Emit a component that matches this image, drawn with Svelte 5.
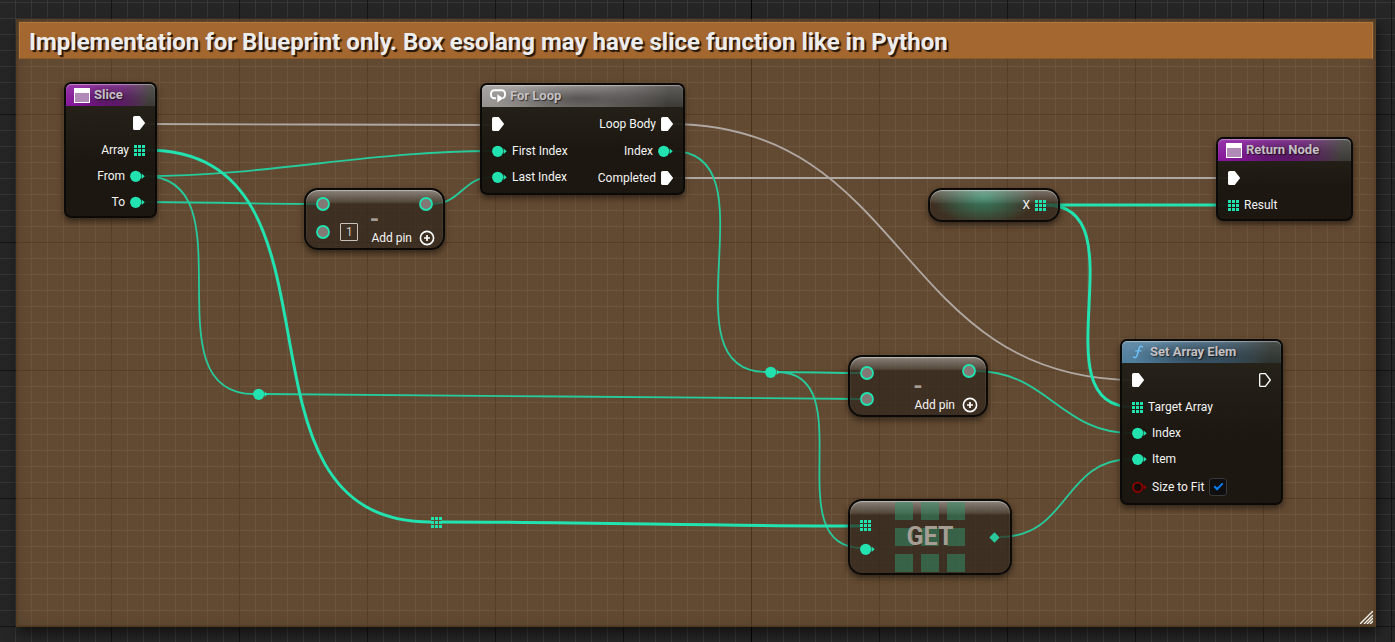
<script>
  // Output tangents grow with the total distance between both pins.
  function spline([x1, y1, x2, y2]) {
    const t = Math.round((Math.abs(x2 - x1) + Math.abs(y2 - y1)) / 3);
    return `M${x1} ${y1}C${x1 + t} ${y1} ${x2 - t} ${y2} ${x2} ${y2}`;
  }

  const wires = [
    { kind: 'exec', at: [142, 124, 495, 125] },
    { kind: 'exec', at: [670, 124, 1135, 380] },
    { kind: 'exec', at: [670, 178, 1231, 178] },
    { kind: 'int', at: [144, 176, 492, 151] },
    { kind: 'int', at: [144, 176, 254, 394] },
    { kind: 'int', at: [144, 202, 317, 204] },
    { kind: 'int', at: [432, 204, 492, 177] },
    { kind: 'int', at: [672, 151, 766, 372] },
    { kind: 'int', at: [264, 394, 861, 399] },
    { kind: 'int', at: [777, 372, 861, 373] },
    { kind: 'int', at: [777, 372, 862, 548] },
    { kind: 'int', at: [975, 371, 1132, 433] },
    { kind: 'int', at: [1000, 537, 1132, 459] },
    { kind: 'array', at: [146, 150, 431, 522] },
    { kind: 'array', at: [441, 522, 861, 526] },
    { kind: 'array', at: [1046, 205, 1228, 205] },
    { kind: 'array', at: [1046, 205, 1132, 407] }
  ];

  const nodes = [
    {
      title: 'Slice', icon: 'window', tone: 'purple', x: 64, y: 82, w: 93,
      ins: [],
      outs: [['exec', ''], ['array', 'Array'], ['int', 'From'], ['int', 'To']]
    },
    {
      title: 'For Loop', icon: 'loop', tone: 'grey', x: 480, y: 83, w: 205,
      ins: [['exec', ''], ['int', 'First Index'], ['int', 'Last Index']],
      outs: [['exec', 'Loop Body'], ['int', 'Index'], ['exec', 'Completed']]
    },
    {
      title: 'Return Node', icon: 'window', tone: 'purple', x: 1216, y: 137, w: 137,
      ins: [['exec', ''], ['array', 'Result']],
      outs: []
    },
    {
      title: 'Set Array Elem', icon: 'fn', tone: 'blue', x: 1120, y: 339, w: 163,
      ins: [['exec', ''], ['array', 'Target Array'], ['int', 'Index'], ['int', 'Item'], ['bool', 'Size to Fit']],
      outs: [['execOpen', '']]
    }
  ];

  let first = $state('1');
  let sizeToFit = $state(true);
</script>

{#snippet pin(kind)}
  {#if kind === 'exec' || kind === 'execOpen'}
    <svg class="pin" width="12" height="14" viewBox="0 0 12 14">
      <path d="M1.6.7H6.4L11.3 7 6.4 13.3H1.6Q.7 13.3.7 12.4V1.6Q.7.7 1.6.7Z"
        fill={kind === 'exec' ? '#fff' : 'none'} stroke="#fff" stroke-width="1.3" stroke-linejoin="round" />
    </svg>
  {:else if kind === 'array'}
    <svg class="pin" width="11" height="12" viewBox="0 0 11 12" shape-rendering="crispEdges">
      <path d="M0 1h3v3H0zM4 1h3v3H4zM8 1h3v3H8zM0 5h3v3H0zM4 5h3v3H4zM8 5h3v3H8zM0 9h3v3H0zM4 9h3v3H4zM8 9h3v3H8z" fill="#22e2b0" />
    </svg>
  {:else if kind === 'int'}
    <svg class="pin" width="15" height="12" viewBox="0 0 15 12">
      <circle cx="5.7" cy="6.3" r="5.6" fill="#22e2b0" />
      <path d="M11.6 3.5 14.7 6.3 11.6 9.1Z" fill="#22e2b0" />
    </svg>
  {:else if kind === 'bool'}
    <svg class="pin" width="15" height="12" viewBox="0 0 15 12">
      <circle cx="5.7" cy="6.3" r="4.7" fill="#150b08" stroke="#8b0000" stroke-width="1.8" />
      <path d="M11.6 3.5 14.7 6.3 11.6 9.1Z" fill="#8b0000" />
    </svg>
  {:else if kind === 'wild'}
    <svg class="pin" width="14" height="14" viewBox="0 0 14 14">
      <circle cx="7" cy="7" r="6" fill="#827875" stroke="#22e2b0" stroke-width="1.8" />
    </svg>
  {:else if kind === 'diamond'}
    <svg class="pin" width="11" height="11" viewBox="0 0 11 11">
      <path d="M5.5.3 10.7 5.5 5.5 10.7.3 5.5Z" fill="#29c99c" />
    </svg>
  {/if}
{/snippet}

{#snippet icon(name)}
  {#if name === 'window'}
    <svg width="16" height="15" viewBox="0 0 16 15">
      <rect x=".5" y=".5" width="15" height="14" fill="#b089b6" stroke="#fff" />
      <rect width="16" height="5" fill="#fff" />
    </svg>
  {:else if name === 'loop'}
    <svg width="16" height="14" viewBox="0 0 16 14" fill="none" stroke="#fff" stroke-width="1.9">
      <path d="M6 9.3H4.3A3.3 3.3 0 0 1 1 6V4.5A3.3 3.3 0 0 1 4.3 1.2H11.7A3.3 3.3 0 0 1 15 4.5V6A3.3 3.3 0 0 1 12.6 9.1" />
      <path d="M7.3 5.2V13.4L13.2 9.3Z" fill="#fff" stroke="none" />
    </svg>
  {:else}
    <svg width="16" height="14" viewBox="0 0 16 14" fill="none" stroke="#6fc0f5" stroke-linecap="round">
      <path d="M12.3 2C11.8.8 9.8.8 9.1 3L7.1 10.4C6.5 12.9 4.3 13.1 3.6 11.9" stroke-width="1.5" />
      <path d="M5.5 5.8H11" stroke-width="1.2" />
    </svg>
  {/if}
{/snippet}

{#snippet addPin()}
  <button class="add" type="button">
    Add pin
    <svg width="16" height="16" viewBox="0 0 16 16" fill="none" stroke="#fff">
      <circle cx="8" cy="8" r="6.6" stroke-width="1.6" />
      <path d="M8 5V11M5 8H11" stroke-width="1.7" />
    </svg>
  </button>
{/snippet}

<main class="graph">
  <section class="comment">
    <h1>Implementation for Blueprint only. Box esolang may have slice function like in Python</h1>
    <svg class="grip" width="13" height="13" viewBox="0 0 13 13" stroke="#f4f0ea" stroke-width="1.4">
      <path d="M0 13 13 0M4 13 13 4M7 13 13 7M10 13 13 10" />
    </svg>
  </section>

  <svg class="wires" width="1" height="1" fill="none">
    {#each wires as wire}
      <path class={wire.kind} d={spline(wire.at)} />
    {/each}
  </svg>

  {#each nodes as node}
    <article class="node" style="left:{node.x}px;top:{node.y}px;width:{node.w}px">
      <header class={node.tone}>
        {@render icon(node.icon)}
        <h2>{node.title}</h2>
      </header>
      <div class="pins">
        <ul>
          {#each node.ins as [kind, label]}
            <li class={kind}>
              {@render pin(kind)}
              {#if kind === 'bool'}
                <label for="fit">{label}</label>
                <input id="fit" type="checkbox" bind:checked={sizeToFit} />
              {:else}
                <span>{label}</span>
              {/if}
            </li>
          {/each}
        </ul>
        <ul class="out">
          {#each node.outs as [kind, label]}
            <li class={kind}><span>{label}</span>{@render pin(kind)}</li>
          {/each}
        </ul>
      </div>
    </article>
  {/each}

  <article class="compact minus" style="left:304px;top:188px;width:141px">
    <h2>-</h2>
    <ul>
      <li>{@render pin('wild')}</li>
      <li>{@render pin('wild')}<input class="value" type="text" aria-label="Subtracted value" bind:value={first} /></li>
    </ul>
    <ul class="out"><li>{@render pin('wild')}</li></ul>
    {@render addPin()}
  </article>

  <article class="compact minus" style="left:848px;top:355px;width:140px">
    <h2>-</h2>
    <ul class="low">
      <li>{@render pin('wild')}</li>
      <li>{@render pin('wild')}</li>
    </ul>
    <ul class="out"><li>{@render pin('wild')}</li></ul>
    {@render addPin()}
  </article>

  <article class="compact variable" style="left:928px;top:188px;width:132px">
    <ul class="out"><li><span>X</span>{@render pin('array')}</li></ul>
  </article>

  <article class="compact get" style="left:848px;top:499px;width:164px">
    <div class="tiles">
      {#each Array(9) as _}<i></i>{/each}
    </div>
    <h2>GET</h2>
    <ul>
      <li>{@render pin('array')}</li>
      <li>{@render pin('int')}</li>
    </ul>
    <ul class="out"><li>{@render pin('diamond')}</li></ul>
  </article>

  <div class="reroute" style="left:253px;top:388px">{@render pin('int')}</div>
  <div class="reroute" style="left:765px;top:366px">{@render pin('int')}</div>
  <div class="reroute" style="left:431px;top:516px">{@render pin('array')}</div>
</main>

<style>
  :global(body) {
    margin: 0;
    background: #262626;
  }

  .graph {
    position: relative;
    display: flex;
    box-sizing: border-box;
    min-height: 100vh;
    padding: 19px 19px 15px 16px;
    overflow: hidden;
    color: #f4f4f4;
    font: 12px/16px Roboto, sans-serif;
    background:
      linear-gradient(#040404, #040404) 751px 0 / 1px 100% no-repeat,
      linear-gradient(90deg, #151515 1px, transparent 1px) 111px 0 / 128px 128px,
      linear-gradient(#151515 1px, transparent 1px) 0 114px / 128px 128px,
      linear-gradient(90deg, #363636 1px, transparent 1px) 15px 0 / 16px 16px,
      linear-gradient(#363636 1px, transparent 1px) 0 2px / 16px 16px,
      #262626;
  }

  .comment {
    display: flex;
    flex-direction: column;
    flex: 1;
    box-sizing: border-box;
    padding: 3px;
    background: rgba(238, 155, 75, 0.3);
    box-shadow:
      inset 0 0 0 2px rgba(82, 48, 16, 0.35),
      inset 0 0 14px rgba(60, 60, 50, 0.5),
      2px 6px 12px rgba(0, 0, 0, 0.55);
  }

  h1 {
    box-sizing: border-box;
    margin: 0;
    padding: 7px 9px 3px;
    border: 1px solid #b5763a;
    border-bottom-color: #8d5827;
    background: #a3672f;
    color: #ededed;
    font-size: 24px;
    font-weight: 700;
    line-height: 25px;
    text-shadow: 2px 2px 1px rgba(0, 0, 0, 0.8);
  }

  .grip {
    margin: auto 0 0 auto;
  }

  .wires {
    position: absolute;
    left: 0;
    top: 0;
    overflow: visible;
  }

  .wires .exec { stroke: #afa7a1; stroke-width: 1.8; }
  .wires .int { stroke: #28c99b; stroke-width: 1.8; }
  .wires .array { stroke: #22e2b0; stroke-width: 3; }

  h2,
  ul {
    margin: 0;
    padding: 0;
    list-style: none;
  }

  .node,
  .compact {
    position: absolute;
    box-sizing: border-box;
    border: 2px solid #0b0a08;
    box-shadow: 0 3px 6px rgba(0, 0, 0, 0.5);
  }

  .node {
    padding-bottom: 1px;
    border-radius: 7px;
    background: linear-gradient(rgba(36, 34, 27, 0.93), rgba(24, 21, 15, 0.95) 60%);
  }

  header {
    display: flex;
    align-items: center;
    gap: 4px;
    height: 22px;
    padding-left: 8px;
    border-radius: 5px 5px 0 0;
    box-shadow: inset 0 1px 1px rgba(255, 255, 255, 0.4);
  }

  header h2 {
    color: #c4c0c4;
    font-size: 13px;
    font-weight: 700;
    text-shadow: 1px 1px 1px rgba(0, 0, 0, 0.6);
  }

  .purple {
    background:
      linear-gradient(rgba(255, 255, 255, 0.14), transparent),
      radial-gradient(ellipse 45% 70% at 48% 60%, rgba(20, 5, 25, 0.5), transparent),
      linear-gradient(100deg, #85159a 20%, #741a82 60%, #3c3a36 92%);
  }

  .grey {
    background:
      linear-gradient(rgba(255, 255, 255, 0.18), transparent),
      radial-gradient(ellipse 45% 70% at 48% 60%, rgba(20, 18, 16, 0.5), transparent),
      linear-gradient(100deg, #94918f 20%, #787573 60%, #3c3a36 92%);
  }

  .blue {
    background:
      linear-gradient(rgba(255, 255, 255, 0.12), transparent),
      radial-gradient(ellipse 45% 70% at 48% 60%, rgba(15, 22, 28, 0.6), transparent),
      linear-gradient(100deg, #4f7d9c 20%, #42647c 60%, #2d332f 92%);
  }

  .pins {
    display: flex;
    justify-content: space-between;
    padding: 4px 10px 0;
  }

  li {
    display: flex;
    align-items: center;
    gap: 5px;
    height: 26px;
  }

  .pins li:first-child { margin-bottom: 1px; }
  .pins li.bool { height: 30px; }

  .out { margin-left: auto; }
  .out li { justify-content: flex-end; }
  .out .exec:not(:first-child) { height: 28px; }
  .pin { flex: none; }

  input[type='checkbox'] {
    appearance: none;
    display: grid;
    place-items: center;
    box-sizing: border-box;
    width: 18px;
    height: 18px;
    margin: 0;
    border: 1px solid #38383a;
    border-radius: 3px;
    background: #0f0f0f;
  }

  input[type='checkbox']:checked::after {
    content: '';
    width: 7px;
    height: 3px;
    margin-bottom: 3px;
    border: solid #0a7cf0;
    border-width: 0 0 2px 2px;
    transform: rotate(-45deg);
  }

  .compact {
    display: grid;
    border-radius: 14px;
    background:
      linear-gradient(rgba(255, 255, 255, 0.4), rgba(255, 255, 255, 0.12) 12px, transparent 14px),
      rgba(46, 37, 27, 0.7);
    box-shadow:
      inset 0 1px 1px rgba(255, 255, 255, 0.45),
      0 3px 6px rgba(0, 0, 0, 0.5);
  }

  .compact > * {
    grid-area: 1 / 1;
    place-self: start;
  }

  .compact > h2 {
    place-self: center;
    color: #a69e94;
    font-size: 25px;
    font-weight: 700;
    line-height: 28px;
  }

  .compact > ul { padding: 0 10px; }
  .compact > .out { justify-self: end; }

  .minus {
    height: 62px;
  }

  .compact.minus > h2 {
    font-size: 24px;
  }

  .minus li { height: 28px; }
  .minus .low { padding-top: 3px; }
  .minus .low li { height: 26px; }

  .value {
    box-sizing: border-box;
    width: 18px;
    height: 18px;
    margin-left: 5px;
    padding: 0 5px;
    border: 1px solid #c8c2ba;
    border-radius: 1px;
    background: transparent;
    color: #d0cac2;
    font: inherit;
  }

  .compact > .add {
    place-self: end;
    display: flex;
    align-items: center;
    gap: 7px;
    padding: 0 8px 2px 0;
    border: 0;
    background: none;
    color: inherit;
    font: inherit;
  }

  .variable {
    background:
      linear-gradient(rgba(255, 255, 255, 0.32), rgba(255, 255, 255, 0.08) 12px, transparent 14px),
      radial-gradient(ellipse 52px 30px at 42% 20%, rgba(50, 190, 150, 0.6), transparent),
      rgba(46, 37, 27, 0.7);
  }

  .variable > .out { padding: 2px 12px; }

  .get > ul { padding: 12px 10px; }
  .get li { height: 24px; }
  .get > .out { align-self: center; padding: 0 10px; }

  .tiles {
    display: grid;
    grid-template-columns: repeat(3, 18px);
    gap: 8px;
  }

  .compact > .tiles { place-self: center; }

  .tiles i {
    height: 18px;
    background: rgba(50, 150, 110, 0.5);
  }

  .reroute {
    position: absolute;
    display: flex;
  }
</style>
